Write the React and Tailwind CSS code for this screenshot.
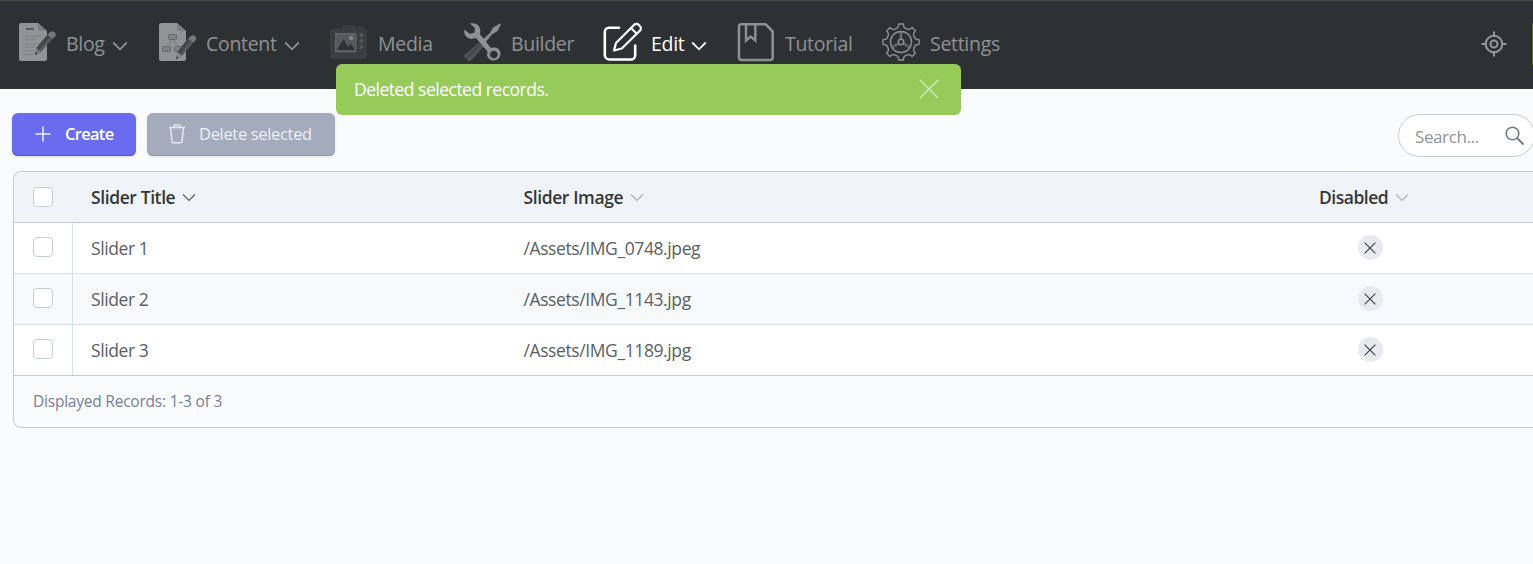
import React from 'react';

function BlogIcon() {
  return (
    <svg width="38" height="40" viewBox="0 0 38 40" fill="none">
      <path d="M3 1H20L29 9V37a2 2 0 0 1-2 2H3a2 2 0 0 1-2-2V3a2 2 0 0 1 2-2Z" fill="#929395" />
      <path d="M20 1V7a2 2 0 0 0 2 2H29Z" fill="#7d7e80" />
      <path d="M8 7H16" stroke="#595b5e" strokeWidth="2" />
      <path d="M7 14H24M7 17H18M7 22H22M7 25H18M7 29H17M7 32.500H17" stroke="#808184" strokeWidth="1" />
      <path d="M17 32.500L18.500 26L29.500 12.500L34.500 16.800L23 30Z" fill="#5a5b5d" />
      <path d="M18.500 26L29.500 12.500L32 14.700L21 28.500Z" fill="#454648" />
      <path d="M29.500 12.500L31.500 10.800a3.400 3.400 0 0 1 5.500 4L34.500 16.800Z" fill="#77787a" />
      <path d="M17 32.500L18.500 26L23 30Z" fill="#77787a" />
      <path d="M17 33L17.800 30.200L19.600 31.700Z" fill="#303234" />
    </svg>
  );
}

function ContentIcon() {
  return (
    <svg width="38" height="40" viewBox="0 0 38 40" fill="none">
      <path d="M3 1H19L28 9V37a2 2 0 0 1-2 2H3a2 2 0 0 1-2-2V3a2 2 0 0 1 2-2Z" fill="#929395" />
      <path d="M19 1V7a2 2 0 0 0 2 2H28Z" fill="#7d7e80" />
      <path d="M14 17L9 24.500M15 17L20 24.500" stroke="#7a7b7d" />
      <g fill="#808183" stroke="#67696b">
        <rect x="10.500" y="12.500" width="8" height="5" rx="1" />
        <rect x="4.500" y="24.500" width="8" height="5" rx="1" />
        <rect x="16.500" y="24.500" width="8" height="5" rx="1" />
      </g>
      <path d="M18 37L19.500 30L30 16.500L35 20.800L24 34Z" fill="#5a5b5d" />
      <path d="M19.500 30L30 16.500L32.500 18.700L22 32.500Z" fill="#454648" />
      <path d="M30 16.500L32 14.800a3.400 3.400 0 0 1 5.500 4L35 20.800Z" fill="#77787a" />
      <path d="M18 37L19.500 30L24 34Z" fill="#88898b" />
      <path d="M18 37L18.800 34.200L20.600 35.700Z" fill="#303234" />
    </svg>
  );
}

function MediaIcon() {
  return (
    <svg width="38" height="40" viewBox="0 0 38 40" fill="none">
      <path d="M3 7H11L13.500 3.200H25L27.500 7H28V4.500H33V7H34a3 3 0 0 1 3 3V34a3 3 0 0 1-3 3H3a3 3 0 0 1-3-3V10a3 3 0 0 1 3-3Z" fill="#3b3d3f" />
      <rect x="5.700" y="11.700" width="20" height="18" fill="#57595b" stroke="#626466" strokeWidth="1.400" />
      <path d="M7 28L13.500 17L18 25L20.500 21.500L25 28Z" fill="#2f3234" />
      <circle cx="21" cy="16" r="2.200" fill="#85878a" />
      <g fill="#555759">
        <circle cx="31.500" cy="13" r="2" />
        <circle cx="31.500" cy="19" r="2" />
        <circle cx="31.500" cy="25" r="2" />
      </g>
    </svg>
  );
}

function BuilderIcon() {
  return (
    <svg width="38" height="40" viewBox="0 0 38 40" fill="none">
      <path d="M18 19L22 23L8 38.500a2 2 0 0 1-3 0L2 35.500a2 2 0 0 1 0-3Z" fill="#505254" />
      <path d="M4.500 35L18 22" stroke="#3e4042" strokeWidth="1.500" />
      <path d="M18 19L27 11L30 5.500L37 1.500L38 2.500L34.500 9L29 12.500L21 22Z" fill="#8c8d8f" />
      <path d="M1.500 7.500L7 12L11.500 10.500L12 6L7 1.500C14 0 19 5 16.800 12L28 26C35 24 39 29 37 34.500C34 40.500 25 39.500 24 33L24.500 29.500L13 16C5 19 0 13 1.500 7.500ZM30.800 28.800a3.800 3.800 0 1 0 .1 0Z" fill="#909193" fillRule="evenodd" />
    </svg>
  );
}

function EditIcon() {
  return (
    <svg width="40" height="40" viewBox="0 0 40 40" fill="none" stroke="#fff" strokeLinejoin="round" strokeLinecap="round">
      <path d="M16 5.800H6a4.200 4.200 0 0 0-4.200 4.200V33A4.600 4.600 0 0 0 6.400 37.500H28a4.200 4.200 0 0 0 4.200-4.200V23.500" strokeWidth="2.600" />
      <path d="M11 28.500L13 21L31 3a3.200 3.200 0 0 1 4.800 0l1 1a3.200 3.200 0 0 1 0 4.800L18.800 26.500Z" strokeWidth="2.200" />
      <path d="M28 6L33.500 11.500" strokeWidth="2" />
    </svg>
  );
}

function TutorialIcon() {
  return (
    <svg width="38" height="40" viewBox="0 0 38 40" fill="none" stroke="#8e9092">
      <path d="M4 2.200H28.500L35.700 9.500V35.500a2.500 2.500 0 0 1-2.500 2.500H4.500A2.500 2.500 0 0 1 2 35.500V4.200a2 2 0 0 1 2-2Z" strokeWidth="2.500" strokeLinejoin="round" />
      <path d="M9 3V18.500L13.600 14.500L18.300 18.500V3" strokeWidth="2.400" />
    </svg>
  );
}

function gearPath() {
  const points = [];
  for (let i = 0; i < 8; i++) {
    const a = (i * Math.PI) / 4;
    [[-0.29, 14.4], [-0.18, 15.5], [-0.13, 18.2], [0.13, 18.2], [0.18, 15.5], [0.29, 14.4]].forEach(([d, r]) => {
      points.push(`${(19 + r * Math.sin(a + d)).toFixed(2)} ${(20 - r * Math.cos(a + d)).toFixed(2)}`);
    });
  }
  return `M${points.join('L')}Z`;
}

function SettingsIcon() {
  return (
    <svg width="38" height="40" viewBox="0 0 38 40" fill="none" stroke="#8e9092" strokeWidth="1.400" strokeLinejoin="round">
      <path d={gearPath()} />
      <circle cx="19" cy="20" r="10.500" />
      <circle cx="19" cy="20" r="2.700" />
      <path d="M18.300 9.500V17M19.700 9.500V17M16 21L9.500 24.700M16.800 22.300L10.300 26M22 21L28.500 24.700M21.200 22.300L27.700 26" strokeWidth="0.800" />
    </svg>
  );
}

function Chevron({ className }) {
  return (
    <svg className={className} viewBox="0 0 16 10" fill="none" stroke="currentColor">
      <path d="M1.200 1.500L8 8.300L14.800 1.500" />
    </svg>
  );
}

function Cross({ className }) {
  return (
    <svg className={className} viewBox="0 0 20 20" fill="none" stroke="currentColor">
      <path d="M1 1L19 19M19 1L1 19" />
    </svg>
  );
}

const navItems = [
  { label: 'Blog', Icon: BlogIcon, box: 'w-[140px]', menu: true },
  { label: 'Content', Icon: ContentIcon, box: 'w-[172px]', menu: true },
  { label: 'Media', Icon: MediaIcon, box: 'w-[133px]' },
  { label: 'Builder', Icon: BuilderIcon, box: 'w-[140px]' },
  { label: 'Edit', Icon: EditIcon, box: 'w-[134px]', menu: true, active: true },
  { label: 'Tutorial', Icon: TutorialIcon, box: 'w-[145px]' },
  { label: 'Settings', Icon: SettingsIcon, box: 'w-[140px]' },
];

function Navbar() {
  return (
    <header className="flex h-[89px] items-start justify-between border-t border-[#464a45] bg-[#2d3134]">
      <nav className="flex pt-[21px] pl-[18px]">
        {navItems.map(({ label, Icon, box, menu, active }) => (
          <a key={label} className={`flex h-10 shrink-0 items-center ${box} ${active ? 'text-white' : 'text-[#8f9193]'}`}>
            <span className="mr-[10px] w-[38px] shrink-0"><Icon /></span>
            <span className="pt-1 text-[19.500px] leading-6 tracking-[-0.3px]">{label}</span>
            {menu && <Chevron className="mt-[7px] ml-[7px] h-[10px] w-4 shrink-0 stroke-[1.800]" />}
          </a>
        ))}
      </nav>
      <div className="flex">
        <svg className="mt-[30px] mr-[25px]" width="26" height="26" viewBox="0 0 26 26" fill="none" stroke="#97999b" strokeWidth="2">
          <circle cx="13" cy="13" r="8.300" />
          <circle cx="13" cy="13" r="3.500" />
          <path d="M13 .5V5M13 21V25.500M.5 13H5M21 13H25.500" />
        </svg>
        <div className="mt-[22px] h-[42px] w-px bg-[#5d6b1e]" />
      </div>
    </header>
  );
}

function Toast() {
  return (
    <div className="absolute top-16 left-[336px] flex h-[51px] w-[625px] items-center justify-between rounded-md bg-[#96cb5a] pr-[22px] pb-px pl-[18px] text-white">
      <span className="pt-px text-[17.500px] tracking-[-0.5px]">Deleted selected records.</span>
      <Cross className="size-5 stroke-[1.700] text-[#cde6b1]" />
    </div>
  );
}

function Checkbox({ className = '' }) {
  return <span className={`block size-5 rounded-[4px] border border-[#c6cedb] bg-white ${className}`} />;
}

const rows = [
  ['Slider 1', '/Assets/IMG_0748.jpeg'],
  ['Slider 2', '/Assets/IMG_1143.jpg'],
  ['Slider 3', '/Assets/IMG_1189.jpg'],
];

function Records() {
  const columns = 'grid grid-cols-[59px_432px_1fr]';
  return (
    <section className="mt-[15px] ml-[13px] rounded-l-lg border border-r-0 border-[#c3ccd6] bg-[#fafbfd]">
      <div className={`${columns} h-[51px] items-center rounded-tl-lg border-b border-[#c3ccd6] bg-[#f0f4f9] text-[17.500px] font-semibold text-[#333638]`}>
        <Checkbox className="ml-[19px]" />
        <div className="flex items-center pl-[18px]">
          <span className="tracking-[-0.4px]">Slider Title</span>
          <Chevron className="ml-[7px] h-[9px] w-[14px] stroke-[1.500] text-[#5e6163]" />
        </div>
        <div className="flex items-center justify-between pl-[18.500px]">
          <div className="flex items-center">
            <span className="tracking-[-0.4px]">Slider Image</span>
            <Chevron className="ml-[7px] h-[9px] w-[14px] stroke-[1.500] text-[#b1b4b8]" />
          </div>
          <div className="flex w-[214px] items-center">
            <span className="tracking-[-0.5px]">Disabled</span>
            <Chevron className="ml-[7px] h-[9px] w-[14px] stroke-[1.500] text-[#b1b4b8]" />
          </div>
        </div>
      </div>
      {rows.map(([title, image], i) => (
        <div key={title} className={`${columns} h-[51px] border-b text-[17.500px] text-[#5b6062] ${i === 2 ? 'border-[#c3ccd6]' : 'border-[#d5dfe8]'} ${i === 1 ? 'bg-[#f7f9fb]' : 'bg-white'}`}>
          <div className="flex items-center border-r border-[#d5dfe8] pb-0.5 pl-[19px]"><Checkbox /></div>
          <div className="flex items-center pl-[18px] tracking-[-0.4px]">{title}</div>
          <div className="flex items-center justify-between pl-[18.500px]">
            <span className="tracking-[-0.4px]">{image}</span>
            <span className="mr-[150px] mb-0.5 flex size-[25px] items-center justify-center rounded-full bg-[#e9eaef]">
              <Cross className="mt-0.5 mr-px size-3 stroke-[2] text-[#414345]" />
            </span>
          </div>
        </div>
      ))}
      <div className="flex h-[51px] items-center pl-[19px] text-[15.500px] tracking-[-0.22px] text-[#76809a]">Displayed Records: 1-3 of 3</div>
    </section>
  );
}

export default function App() {
  return (
    <div className="relative h-[564px] overflow-hidden bg-[#fafbfd] font-['Open_Sans','Noto_Sans',sans-serif]">
      <Navbar />
      <main>
        <div className="flex h-[67px] items-end justify-between pl-3">
          <div className="flex gap-[11px] text-[16.500px]">
            <button className="flex h-[43px] w-[124px] items-center rounded-md bg-[#6a6cef] pr-0 pb-0.5 pl-[22px] font-semibold text-white shadow-[0_1px_3px_#0000001f,inset_0_-1px_0_#5656cc]">
              <svg width="18" height="18" viewBox="0 0 18 18" fill="none" stroke="#eeeefe" strokeWidth="1.500"><path d="M9 1.500V16.500M1.500 9H16.500" /></svg>
              <span className="ml-[13px] pt-0.5 tracking-[-0.7px]">Create</span>
            </button>
            <button className="flex h-[43px] w-[188px] items-center rounded-md bg-[#a4abbd] pb-0.5 pl-[21px] text-[#eef0f4] shadow-[0_1px_3px_#0000001f,inset_0_-1px_0_#9299ad]">
              <svg width="18" height="20" viewBox="0 0 18 20" fill="none" stroke="#e5e8ed" strokeWidth="1.500" strokeLinejoin="round"><path d="M1 3.500H17M5.500 3.200L6.500 1H11.500L12.500 3.200M2.500 4L4 17.500a1.500 1.500 0 0 0 1.500 1.300H12.500a1.500 1.500 0 0 0 1.500-1.300L15.500 4" /></svg>
              <span className="ml-[13px] pt-0.5 tracking-[-0.33px]">Delete selected</span>
            </button>
          </div>
          <label className="-mr-0.5 -mb-px flex h-[43px] w-[137px] items-center rounded-full border border-[#c3ccd8] bg-white pl-4">
            <span className="w-[90px] pt-0.5 text-[17px] tracking-[-0.4px] text-[#909497]">Search...</span>
            <svg width="20" height="20" viewBox="0 0 20 20" fill="none" stroke="#737b7c"><circle cx="7.500" cy="7.500" r="6.300" strokeWidth="1.600" /><path d="M12 12L18.500 18.500" strokeWidth="2" /></svg>
          </label>
        </div>
        <Records />
      </main>
      <Toast />
    </div>
  );
}
